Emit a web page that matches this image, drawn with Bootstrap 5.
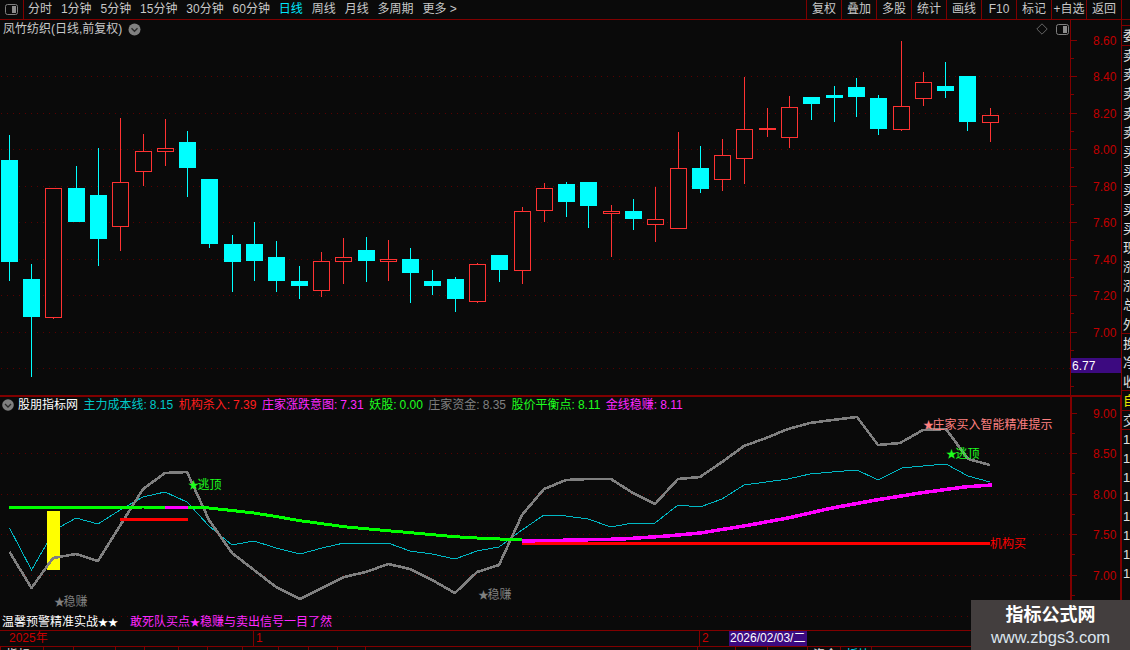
<!DOCTYPE html>
<html lang="zh-CN">
<head>
<meta charset="utf-8">
<title>K线</title>
<link href="https://cdn.jsdelivr.net/npm/bootstrap@5.3.0/dist/css/bootstrap.min.css" rel="stylesheet">
<style>
:root{--dk:#800000;}
html,body{height:650px;overflow:hidden;background:#0a0a0a;}
body{font-family:"Liberation Sans","Noto Sans CJK SC",sans-serif;font-size:12px;line-height:14px;color:#c8c8c8;}
.scr{width:1130px;height:650px;}
.tbar{height:20px;border-bottom:1px solid var(--dk);flex:none;}
.ticon{width:24px;height:19px;border-right:1px solid var(--dk);}
.tleft{gap:8.9px;padding-left:4px;}
.tbtn{padding:0;border:0;border-radius:0;background:none;color:#c8c8c8;font:inherit;line-height:19px;height:19px;}
.tbtn.on{color:#00e6ff;}
.tright .tbtn{width:35px;border-left:1px solid var(--dk);text-align:center;}
.tright{margin-right:8px;border-right:1px solid var(--dk);}
.panes{width:1122px;}
.pane-a{height:377px;}
.pane-b{height:233px;}
.cvs{position:absolute;left:0;top:0;display:block;}
.ptitle{position:absolute;left:3px;top:2px;height:14px;white-space:nowrap;}
.tchev{margin-left:6px;}
.picons{position:absolute;left:1036px;top:3px;}
.bline{position:absolute;left:2px;top:1px;height:14px;gap:5.5px;white-space:nowrap;}
.bchev{margin-right:-1.5px;}
.bfoot{position:absolute;left:2px;top:218px;height:14px;white-space:nowrap;}
.c-w{color:#fff;}.c-t{color:#00c8c8;}.c-r{color:#ff1e1e;}.c-m{color:#ff28ff;}.c-g{color:#1eff1e;}.c-n{color:#808080;}
.vv{margin-left:3px;}
.sm-star{font-size:10px;}
.foot-m{margin-left:12px;}
.tax{height:17px;border-top:1px solid var(--dk);border-bottom:1px solid var(--dk);flex:none;color:#c80000;line-height:15px;}
.tax span{display:block;height:15px;}
.t1{width:253px;padding-left:9px;}
.t2{width:446px;padding-left:2px;border-left:1px solid var(--dk);}
.t3{width:30px;padding-left:2px;border-left:1px solid var(--dk);}
.t4{width:78px;background:#3c0a80;color:#fff;padding-left:1px;white-space:nowrap;}
.ttabs{height:4px;overflow:hidden;flex:none;color:#e0e0e0;}
.ttabs span{display:block;flex:none;height:14px;padding:1px 0 0 5px;border-left:1px solid var(--dk);white-space:nowrap;}
.side{width:8px;flex:none;overflow:hidden;color:#e0e0e0;font-size:13px;white-space:nowrap;}
.sbox{height:21px;margin-top:5px;border-top:1px solid var(--dk);border-bottom:1px solid var(--dk);line-height:19px;padding-left:1px;}
.srow{height:19.2px;line-height:19px;padding-left:1px;}
.sdiv{border-bottom:1px solid var(--dk);}
.sy{color:#e6e600;}
.wmark{position:absolute;right:0;top:600px;width:159px;height:50px;background:#433e3e;color:#fff;text-align:center;}
.wm1{font-size:18px;font-weight:700;line-height:20px;margin-top:5px;}
.wm2{font-size:16.5px;line-height:18px;margin-top:3px;color:#dde6f0;}
</style>
</head>
<body>
<div class="scr position-relative d-flex flex-column">
  <div class="tbar d-flex align-items-center justify-content-between">
    <div class="d-flex align-items-center">
      <div class="ticon d-flex align-items-center justify-content-center">
        <svg width="13" height="11" viewBox="0 0 13 11"><rect x=".5" y=".5" width="12" height="10" rx="2" fill="none" stroke="#808080"/><rect x="7" y="2" width="4" height="7" fill="#8c8c8c"/></svg>
      </div>
      <nav class="tleft d-flex align-items-center">
        <button class="btn tbtn">分时</button><button class="btn tbtn">1分钟</button><button class="btn tbtn">5分钟</button><button class="btn tbtn">15分钟</button><button class="btn tbtn">30分钟</button><button class="btn tbtn">60分钟</button><button class="btn tbtn on">日线</button><button class="btn tbtn">周线</button><button class="btn tbtn">月线</button><button class="btn tbtn">多周期</button><button class="btn tbtn">更多 &gt;</button>
      </nav>
    </div>
    <div class="tright d-flex">
      <button class="btn tbtn">复权</button><button class="btn tbtn">叠加</button><button class="btn tbtn">多股</button><button class="btn tbtn">统计</button><button class="btn tbtn">画线</button><button class="btn tbtn">F10</button><button class="btn tbtn">标记</button><button class="btn tbtn">+自选</button><button class="btn tbtn">返回</button>
    </div>
  </div>

  <div class="d-flex flex-grow-1">
    <div class="panes d-flex flex-column">
      <div class="pane-a position-relative">
        <svg id="svgA" class="cvs" width="1122" height="377" viewBox="0 20 1122 377" shape-rendering="crispEdges"></svg>
        <div class="ptitle d-flex align-items-center">凤竹纺织(日线,前复权)
          <svg class="tchev" width="13" height="13" viewBox="0 0 13 13"><circle cx="6.5" cy="6.5" r="6" fill="#808080"/><path d="M3.5 5.2 6.5 8.2 9.5 5.2" fill="none" stroke="#2a2a2a" stroke-width="1.4"/></svg>
        </div>
        <div class="picons d-flex align-items-center gap-2">
          <svg width="12" height="12" viewBox="0 0 12 12"><path d="M6 .8 11.2 6 6 11.2 .8 6Z" fill="none" stroke="#666"/></svg>
          <svg width="13" height="11" viewBox="0 0 13 11"><rect x=".5" y=".5" width="12" height="10" rx="2" fill="none" stroke="#808080"/><rect x="7" y="2" width="4" height="7" fill="#8c8c8c"/></svg>
        </div>
      </div>
      <div class="pane-b position-relative">
        <svg id="svgB" class="cvs" width="1122" height="233" viewBox="0 397 1122 233"></svg>
        <div class="bline d-flex align-items-center">
          <svg class="bchev" width="12" height="12" viewBox="0 0 12 12"><circle cx="6" cy="6" r="5.8" fill="#808080"/><path d="M3 5 6 8 9 5" fill="none" stroke="#2a2a2a" stroke-width="1.3"/></svg>
          <span class="c-w">股朋指标网</span>
          <span class="c-t">主力成本线:<span class="vv">8.15</span></span>
          <span class="c-r">机构杀入:<span class="vv">7.39</span></span>
          <span class="c-m">庄家涨跌意图:<span class="vv">7.31</span></span>
          <span class="c-g">妖股:<span class="vv">0.00</span></span>
          <span class="c-n">庄家资金:<span class="vv">8.35</span></span>
          <span class="c-g">股价平衡点:<span class="vv">8.11</span></span>
          <span class="c-m">金线稳赚:<span class="vv">8.11</span></span>
        </div>
        <div class="bfoot d-flex align-items-center">
          <span class="c-w">温馨预警精准实战<span class="sm-star">★★</span></span>
          <span class="c-m foot-m">敢死队买点<span class="sm-star">★</span>稳赚与卖出信号一目了然</span>
        </div>
      </div>
    </div>
    <aside class="side">
      <div class="sbox">委比</div>
      <div class="srow">卖</div><div class="srow">卖</div><div class="srow">卖</div><div class="srow">卖</div><div class="srow">卖</div>
      <div class="srow">买</div><div class="srow">买</div><div class="srow">买</div><div class="srow">买</div><div class="srow">买</div>
      <div class="srow">现</div><div class="srow">涨</div><div class="srow">涨</div><div class="srow">总</div><div class="srow sdiv">外</div>
      <div class="srow">换</div><div class="srow">净</div><div class="srow sdiv">收</div>
      <div class="srow sy sdiv">自</div>
      <div class="srow sdiv">交</div>
      <div class="srow">1</div><div class="srow">1</div><div class="srow">1</div><div class="srow">1</div><div class="srow">1</div><div class="srow">1</div><div class="srow">1</div><div class="srow">1</div>
    </aside>
  </div>

  <div class="tax d-flex">
    <span class="t1">2025年</span><span class="t2">1</span><span class="t3">2</span><span class="t4">2026/02/03/二</span>
  </div>
  <div id="tabs" class="ttabs d-flex"></div>

  <div class="wmark">
    <div class="wm1">指标公式网</div>
    <div class="wm2">www.zbgs3.com</div>
  </div>
</div>

<script>
(function(){
var NS='http://www.w3.org/2000/svg';
function el(p,n,a,t){var e=document.createElementNS(NS,n);for(var k in a)e.setAttribute(k,a[k]);if(t)e.textContent=t;p.appendChild(e);return e;}
var A=document.getElementById('svgA'),B=document.getElementById('svgB');
var DK='#800000',DOT='#5a0000',AX='#c00000',FF='"Liberation Sans","Noto Sans CJK SC",sans-serif';
function grid(s,ys){ys.forEach(function(y){el(s,'line',{x1:1,x2:1070,y1:y+.5,y2:y+.5,stroke:DOT,'stroke-dasharray':'1 5','shape-rendering':'crispEdges'});});}
function lab(s,x,y,c,t){var star=t.charAt(0)=='★';var e=el(s,'text',{x:x,y:y,fill:c,'font-family':FF,'font-size':12,'shape-rendering':'auto'},star?'':t);
  if(star){el(e,'tspan',{'font-size':11,'letter-spacing':-1.5},'★');el(e,'tspan',{},t.slice(1));}}

/* upper pane */
grid(A,[76,113,149,186,222,259,295,332,368]);
var c=[[9,135,281,160,262,0],[31,264,377,279,317,0],[53,188,319,188,318,1],[76,166,222,188,222,0],[98,148,266,195,239,0],[120,118,251,182,227,1],[143,134,186,151,172,1],[165,119,166,148,152,1],[187,131,197,142,168,0],[209,179,248,179,244,0],[232,235,292,244,262,0],[254,222,281,244,261,0],[276,241,292,257,281,0],[299,266,299,281,286,0],[321,252,297,261,291,1],[343,238,284,257,262,1],[366,237,282,250,261,0],[388,240,281,259,262,1],[410,248,303,259,273,0],[432,270,295,281,286,0],[455,277,312,279,299,0],[477,263,303,264,302,1],[499,255,282,255,270,0],[522,207,284,211,271,1],[544,183,222,188,211,1],[566,182,217,184,202,0],[588,182,228,182,206,0],[611,205,257,211,214,1],[633,199,230,211,219,0],[655,187,242,219,225,1],[678,132,229,168,229,1],[700,146,193,168,189,0],[722,139,191,155,180,1],[744,77,184,129,159,1],[767,108,137,128,130,1],[789,96,148,107,138,1],[811,97,120,97,104,0],[834,86,122,95,98,0],[856,78,117,87,97,0],[878,95,135,98,129,0],[901,41,131,106,130,1],[923,72,106,82,99,1],[945,62,98,86,91,0],[967,76,131,76,122,0],[990,108,142,115,123,1]];
var RED='#ff3232',CY='#00ffff';
c.forEach(function(d){var x=d[0],col=d[5]?RED:CY;
  el(A,'rect',{x:x,y:d[1],width:1,height:d[2]-d[1],fill:col});
  if(d[5]){el(A,'rect',{x:x-8+.5,y:d[3]+.5,width:16,height:Math.max(1,d[4]-d[3]-1),fill:'#0a0a0a',stroke:col});}
  else{el(A,'rect',{x:x-8,y:d[3],width:17,height:d[4]-d[3],fill:col});}
});
/* upper axis */
el(A,'rect',{x:1070,y:20,width:1,height:377,fill:DK});
el(A,'rect',{x:1121,y:20,width:1,height:377,fill:DK});
var ya=[40,76,113,149,186,222,259,295,332,368],la=['8.60','8.40','8.20','8.00','7.80','7.60','7.40','7.20','7.00'];
ya.forEach(function(y,i){
  el(A,'rect',{x:1071,y:y,width:6,height:1,fill:DK});
  el(A,'rect',{x:1071,y:y+18,width:3,height:1,fill:DK});
  if(la[i])lab(A,1093,y+5,AX,la[i]);
});
el(A,'rect',{x:1071,y:358,width:50,height:15,fill:'#3c0a80',stroke:'none'});
lab(A,1072,370,'#fff','6.77');
el(A,'rect',{x:0,y:395,width:1122,height:2,fill:DK});

/* lower pane */
grid(B,[453,494,534,575,616]);
function line(pts,col,w){el(B,'polyline',{points:pts.map(function(p){return p.join(',')}).join(' '),fill:'none',stroke:col,'stroke-width':w,'stroke-linejoin':'round','shape-rendering':'crispEdges'});}
var teal=[[9.5,528],[31.5,570],[53,533],[60,527],[76,518],[98,524],[120,510],[143,497],[165,492],[187,502],[209,526],[232,545],[254,541],[276,548],[300,554],[322,548],[344,543],[388,543],[410,551],[432,554],[455,559],[477,551],[499,547],[522,530],[544,515],[566,516],[588,519],[611,527],[633,523],[655,523],[678,505],[700,507],[722,499],[744,485],[766,482],[788,479],[810,474],[832,472],[857,470],[878,480],[902,468],[923,466],[946,464],[968,476],[990,482]];
var gray=[[9.5,552],[31.5,588],[53,558],[76,554],[98,561],[143,489],[165,473],[187,472],[209,520],[232,553],[254,570],[276,587],[300,599],[344,577],[366,572],[388,564],[410,569],[432,580],[455,593],[477,572],[499,565],[522,515],[544,489],[566,480],[588,479],[611,479],[633,493],[655,504],[678,479],[700,477],[722,462],[744,446],[766,438],[788,429],[810,423],[832,420],[857,417],[878,445],[900,443],[923,430],[946,429],[968,459],[990,465]];
line(teal,'#00b8c4',1);
el(B,'rect',{x:47,y:511,width:13,height:59,fill:'#ffff00','shape-rendering':'crispEdges'});
line(gray,'#808080',2.6);
line([[9,507],[31,508],[53,507],[76,507],[98,508],[143,507],[187,507.5],[209,508],[232,510.5],[254,513],[276,516.5],[300,520.7],[344,526.7],[388,530.7],[455,536.7],[477,538],[522,540]],'#00ff00',3);
line([[165,507.5],[188,507.5]],'#ff00ff',3);
line([[120,519],[188,519]],'#ff0000',3);
line([[522,543.5],[990,543.5]],'#ff0000',3.5);
line([[522,541],[577,540],[622,539],[667,536],[700,533],[744,526],[788,518],[832,508],[876,500],[920,493],[964,487],[992,485]],'#ff00ff',3.5);
lab(B,188,489,'#1eff1e','★逃顶');
lab(B,54,606,'#808080','★稳赚');
lab(B,478,599,'#808080','★稳赚');
lab(B,923,429,'#ff8080','★庄家买入智能精准提示');
lab(B,946,458,'#1eff1e','★逃顶');
lab(B,990,548,'#ff0000','机构买');
/* lower axis */
el(B,'rect',{x:1070,y:397,width:2,height:233,fill:DK,'shape-rendering':'crispEdges'});
el(B,'rect',{x:1120,y:397,width:2,height:233,fill:DK,'shape-rendering':'crispEdges'});
[[413,'9.00'],[453,'8.50'],[494,'8.00'],[534,'7.50'],[575,'7.00']].forEach(function(d){
  el(B,'rect',{x:1072,y:d[0],width:5,height:1,fill:DK,'shape-rendering':'crispEdges'});
  el(B,'rect',{x:1072,y:d[0]+20,width:3,height:1,fill:DK,'shape-rendering':'crispEdges'});
  lab(B,1093,d[0]+5,AX,d[1]);
});

/* clipped tab row */
var sep=[0,43,73,115,144,178,207,242,278,308,337,365,697,735,767,807,840,871];
var names=['指标','A','','','','','','','','','','','','','','资金','板块',''],T=document.getElementById('tabs');
sep.forEach(function(x,i){var s=document.createElement('span');s.style.width=((sep[i+1]||1130)-x)+'px';s.textContent=names[i];if(i==16)s.style.color='#00e6ff';T.appendChild(s);});
})();
</script>
<script src="https://cdn.jsdelivr.net/npm/bootstrap@5.3.0/dist/js/bootstrap.bundle.min.js"></script>
</body>
</html>
